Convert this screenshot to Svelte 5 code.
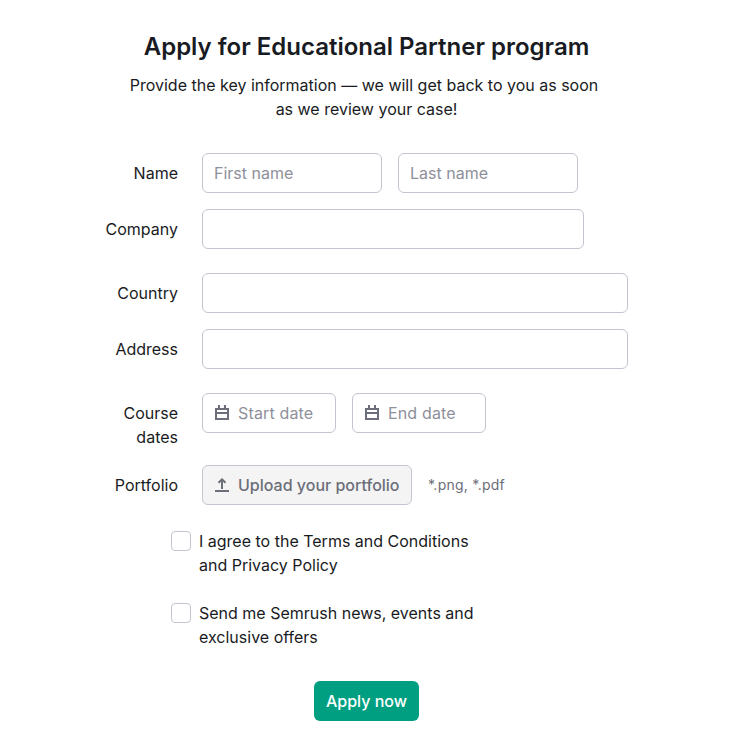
<script>
  const accept = '*.png, *.pdf';
</script>

{#snippet calendar()}
  <svg class="icon" width="16" height="16" viewBox="0 0 16 16" fill="none" stroke="#6c6e79" stroke-width="2">
    <path d="M2 4h12v10H2zM2 8h12M5 0v4.5M11 0v4.5" />
  </svg>
{/snippet}

<main>
  <h1>Apply for Educational Partner program</h1>
  <p class="intro"><span class="lead">Provide the key information — we will get back to you as soon</span><br />as we review your case!</p>

  <form onsubmit={(e) => e.preventDefault()}>
    <div class="row">
      <label for="first">Name</label>
      <input id="first" class="name" placeholder="First name" />
      <input class="name" placeholder="Last name" aria-label="Last name" />
    </div>
    <div class="row gap">
      <label for="company">Company</label>
      <input id="company" class="company" />
    </div>
    <div class="row">
      <label for="country">Country</label>
      <input id="country" class="wide" />
    </div>
    <div class="row gap">
      <label for="address">Address</label>
      <input id="address" class="wide" />
    </div>
    <div class="row">
      <span class="label">Course<br />dates</span>
      <div class="date">{@render calendar()}<span>Start date</span></div>
      <div class="date">{@render calendar()}<span>End date</span></div>
    </div>
    <div class="row">
      <span class="label">Portfolio</span>
      <button type="button" class="upload">
        <svg class="icon" width="16" height="16" viewBox="0 0 16 16" fill="none" stroke="#6c6e79" stroke-width="2">
          <path d="M1 14h14M8 12V2.5M4.5 5.8L8 2.3l3.5 3.5" />
        </svg>
        <span>Upload your portfolio</span>
      </button>
      <span class="hint">{accept}</span>
    </div>

    <div class="checks">
      <label class="check"><input type="checkbox" /><span>I agree to the Terms and Conditions<br />and Privacy Policy</span></label>
      <label class="check"><input type="checkbox" /><span>Send me Semrush news, events and<br />exclusive offers</span></label>
    </div>

    <button class="submit">Apply now</button>
  </form>
</main>

<style>
  :global(body) { background: #fff; }
  main {
    box-sizing: border-box;
    width: 733px;
    height: 753px;
    padding-top: 32px;
    font: 16px/24px Inter, sans-serif;
    color: #191b23;
  }
  h1 { margin: 0; font-size: 24px; line-height: 29px; font-weight: 600; text-align: center; }
  .intro { margin: 12px 0 32px; text-align: center; }
  .lead { margin-right: 5px; }
  form { display: flex; flex-direction: column; }
  .row { display: flex; align-items: flex-start; gap: 16px; margin-bottom: 16px; }
  .row.gap { margin-bottom: 24px; }
  .row > label, .label { width: 178px; margin-right: 8px; padding-top: 8px; text-align: right; flex: none; }
  input, .date, button { box-sizing: border-box; font: inherit; height: 40px; border: 1px solid #c4c4cf; border-radius: 6px; }
  input { padding: 0 11px; background: #fff; margin: 0; }
  input::placeholder { color: #8e909b; opacity: 1; }
  .name { width: 180px; }
  .company { width: 382px; }
  .wide { width: 426px; }
  .date { display: flex; align-items: center; gap: 8px; width: 134px; padding: 0 11px; color: #8e909b; letter-spacing: 0.15px; }
  .icon { flex: none; }
  .upload { display: flex; align-items: center; gap: 8px; width: 210px; padding: 0 11px; background: #f4f4f4; color: #6c6e79; font-weight: 500; white-space: nowrap; }
  .hint { font-size: 14px; line-height: 40px; letter-spacing: 0.25px; color: #6c6e79; }
  .checks { display: flex; flex-direction: column; gap: 24px; margin: 8px 0 32px 171px; }
  .check { display: flex; gap: 8px; }
  .check input { appearance: none; width: 20px; height: 20px; padding: 0; border-radius: 4px; margin-top: 2px; }
  .submit { align-self: center; width: 105px; padding: 0; border: 0; background: #009f81; color: #fff; font-weight: 500; }
</style>
